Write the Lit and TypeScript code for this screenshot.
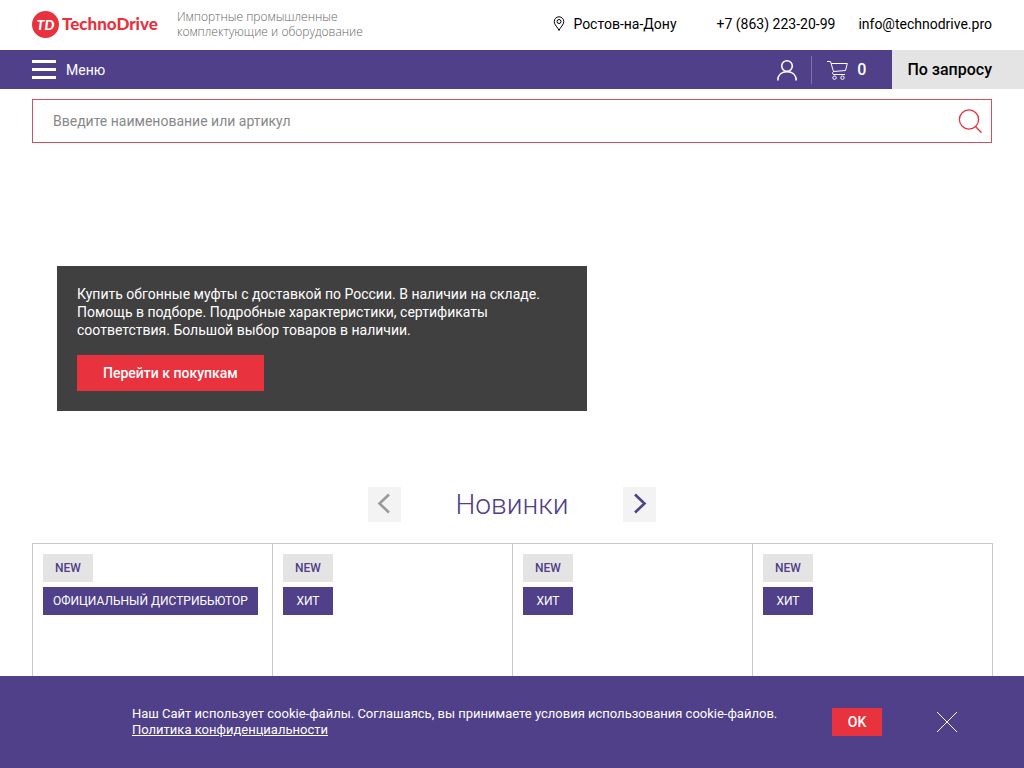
import { LitElement, html, css } from "lit";
import { customElement, property } from "lit/decorators.js";

@customElement("product-card")
class ProductCard extends LitElement {
  @property() label = "";

  static styles = css`
    :host {
      display: flex;
      flex-direction: column;
      align-items: flex-start;
      gap: 5px;
      padding: 10px;
      border-right: 1px solid #c9c9c9;
    }
    .badge {
      box-sizing: border-box;
      min-width: 50px;
      padding: 0 10px;
      background: #4f4089;
      color: #fff;
      font-size: 12px;
      line-height: 28px;
      text-align: center;
      text-transform: uppercase;
      white-space: nowrap;
    }
    .fresh {
      background: #e4e4e4;
      color: #4f4089;
      font-weight: 500;
    }
  `;

  render() {
    return html`
      <span class="badge fresh">New</span>
      <span class="badge">${this.label}</span>
    `;
  }
}

@customElement("app-root")
class AppRoot extends LitElement {
  static styles = css`
    :host {
      display: flex;
      flex-direction: column;
      min-height: 100vh;
      background: #fff;
      color: #000;
      font-family: Roboto, "Liberation Sans", sans-serif;
      font-size: 14px;
      line-height: 18px;
    }
    * {
      box-sizing: border-box;
    }
    a {
      color: inherit;
      text-decoration: none;
    }
    button {
      display: flex;
      align-items: center;
      justify-content: center;
      padding: 0;
      border: 0;
      background: none;
      color: inherit;
      font: inherit;
      cursor: pointer;
    }
    svg {
      display: block;
      flex: none;
      fill: none;
      stroke: currentColor;
    }
    .top {
      display: flex;
      align-items: center;
      height: 50px;
      padding: 0 32px 2px;
    }
    .logo {
      display: flex;
      align-items: center;
      gap: 3px;
      color: #e8323e;
      font-family: Lato, sans-serif;
      font-size: 17px;
      font-weight: 900;
    }
    .mark {
      width: 27px;
      height: 27px;
      border-radius: 50%;
      background: #e8323e;
      color: #fff;
      font-size: 14px;
      font-style: italic;
      line-height: 27px;
      text-align: center;
    }
    .tagline {
      margin: 0 auto 0 19px;
      color: #666;
      font-family: "Open Sans", sans-serif;
      font-size: 12px;
      font-weight: 300;
      line-height: 15px;
    }
    .city {
      gap: 8px;
      margin-right: 40px;
    }
    .phone {
      margin-right: 23px;
    }
    .bar {
      display: flex;
      align-items: center;
      height: 39px;
      padding-left: 32px;
      background: #4f4089;
      color: #fff;
    }
    .menu {
      gap: 10px;
      margin-right: auto;
    }
    .account {
      height: 28px;
      padding-right: 13px;
      border-right: 1px solid #7d72aa;
    }
    .cart {
      display: flex;
      align-items: center;
      gap: 9px;
      padding: 0 26px 0 15px;
      font-size: 16px;
      font-weight: 500;
    }
    .request {
      align-self: stretch;
      padding: 0 32px 0 15px;
      background: #e4e4e4;
      color: #000;
      font-size: 16px;
      font-weight: 500;
      line-height: 39px;
    }
    .search {
      display: flex;
      align-items: center;
      height: 44px;
      margin: 10px 32px 0;
      padding: 0 8px 0 20px;
      border: 1px solid #cf5264;
    }
    .field {
      flex: 1;
      min-width: 0;
      height: 40px;
      padding: 0;
      border: 0;
      outline: 0;
      background: none;
      font: inherit;
    }
    .field::placeholder {
      color: #888;
      opacity: 1;
    }
    .find {
      color: #e8323e;
    }
    .hero {
      padding: 123px 57px 76px;
    }
    .promo {
      display: flex;
      flex-direction: column;
      align-items: flex-start;
      gap: 16px;
      max-width: 530px;
      padding: 19px 20px 20px;
      background: #404040;
      color: #fff;
    }
    .promo p {
      margin: 0;
    }
    .shop {
      padding: 0 26px;
      background: #e8323e;
      font-weight: 500;
      line-height: 36px;
    }
    .heading {
      display: flex;
      align-items: center;
      justify-content: center;
      gap: 55px;
      margin-bottom: 21px;
    }
    .heading h2 {
      margin: 0;
      color: #4f4089;
      font-size: 28px;
      font-weight: 300;
      line-height: 35px;
    }
    .arrow {
      width: 33px;
      height: 35px;
      padding-bottom: 2px;
      background: #f3f3f3;
      color: #4f4089;
    }
    .arrow:disabled {
      color: #9a9a9a;
    }
    .cards {
      display: grid;
      flex: 1;
      grid-template-columns: repeat(4, 1fr);
      min-height: 133px;
      margin: 0 31px 0 32px;
      border: solid #c9c9c9;
      border-width: 1px 0 0 1px;
    }
    .cookies {
      position: sticky;
      bottom: 0;
      display: flex;
      align-items: center;
      min-height: 92px;
      padding: 0 66px 0 132px;
      background: #4f4089;
      color: #fff;
      font-size: 13px;
      line-height: 16px;
    }
    .cookies p {
      flex: 1;
      margin: 0;
    }
    .policy {
      text-decoration: underline;
    }
    .ok {
      width: 50px;
      height: 28px;
      margin-right: 54px;
      background: #e8323e;
      font-size: 14px;
      font-weight: 500;
    }
  `;

  private labels = ["Официальный дистрибьютор", "Хит", "Хит", "Хит"];

  render() {
    return html`
      <header>
        <div class="top">
          <a class="logo" href="#"><span class="mark">TD</span>TechnoDrive</a>
          <p class="tagline">Импортные промышленные<br />комплектующие и оборудование</p>
          <button class="city">
            <svg width="12" height="16" viewBox="0 0 12 16" stroke-width="1">
              <path d="M6 14.500C5 11.500 1.200 8.800 1.200 5.600a4.800 4.800 0 0 1 9.600 0C10.800 8.800 7 11.500 6 14.500Z" />
              <circle cx="6" cy="5.500" r="2" />
            </svg>
            Ростов-на-Дону
          </button>
          <a class="phone" href="tel:+78632232099">+7 (863) 223-20-99</a>
          <a href="mailto:info@technodrive.pro">info@technodrive.pro</a>
        </div>
        <nav class="bar">
          <button class="menu">
            <svg width="24" height="19" viewBox="0 0 24 19" stroke-width="3">
              <path d="M0 1.500h24M0 9.500h24M0 17.500h24" />
            </svg>
            Меню
          </button>
          <a class="account" href="#" aria-label="Личный кабинет">
            <svg width="22" height="28" viewBox="0 0 22 28" stroke-width="1.600">
              <circle cx="11" cy="10" r="5.300" />
              <path d="M1.800 24.500C1.800 19 5.500 15.800 11 15.800s9.200 3.200 9.200 8.700" />
            </svg>
          </a>
          <a class="cart" href="#" aria-label="Корзина">
            <svg width="21" height="20" viewBox="0 0 21 20" stroke-width="1">
              <path d="M0 1.500H3.500L6.500 11.500 18.500 10.500 20.300 3.500H4.200M6.500 11.500C5 12.500 5.300 14.500 7 14.500H18" />
              <circle cx="7.500" cy="17.700" r="1.700" />
              <circle cx="15.500" cy="17.700" r="1.700" />
            </svg>
            0
          </a>
          <a class="request" href="#">По запросу</a>
        </nav>
      </header>

      <form class="search" role="search" @submit=${(e: Event) => e.preventDefault()}>
        <input class="field" type="text" aria-label="Поиск" placeholder="Введите наименование или артикул" />
        <button class="find" aria-label="Найти">
          <svg width="25" height="26" viewBox="0 0 25 26" stroke-width="1.300">
            <circle cx="11" cy="11.500" r="9.600" />
            <path d="M17.500 18.500L23.500 24.800" />
          </svg>
        </button>
      </form>

      <section class="hero">
        <div class="promo">
          <p>
            Купить обгонные муфты с доставкой по России. В наличии на складе. Помощь в подборе.
            Подробные характеристики, сертификаты соответствия. Большой выбор товаров в наличии.
          </p>
          <a class="shop" href="#">Перейти к покупкам</a>
        </div>
      </section>

      <div class="heading">
        <button class="arrow" aria-label="Назад" disabled>
          <svg width="14" height="22" viewBox="0 0 14 22" stroke-width="2.600">
            <path d="M12 1.500L2.500 10.500 12 19.500" />
          </svg>
        </button>
        <h2>Новинки</h2>
        <button class="arrow" aria-label="Вперёд">
          <svg width="14" height="22" viewBox="0 0 14 22" stroke-width="2.600">
            <path d="M2 1.500L11.500 10.500 2 19.500" />
          </svg>
        </button>
      </div>
      <section class="cards">
        ${this.labels.map((label) => html`<product-card label=${label}></product-card>`)}
      </section>

      <footer class="cookies">
        <p>
          Наш Сайт использует cookie-файлы. Соглашаясь, вы принимаете условия использования cookie-файлов.<br />
          <a class="policy" href="#">Политика конфиденциальности</a>
        </p>
        <button class="ok">OK</button>
        <button aria-label="Закрыть">
          <svg width="22" height="22" viewBox="0 0 22 22" stroke-width="1">
            <path d="M1 1L21 21M21 1L1 21" />
          </svg>
        </button>
      </footer>
    `;
  }
}
